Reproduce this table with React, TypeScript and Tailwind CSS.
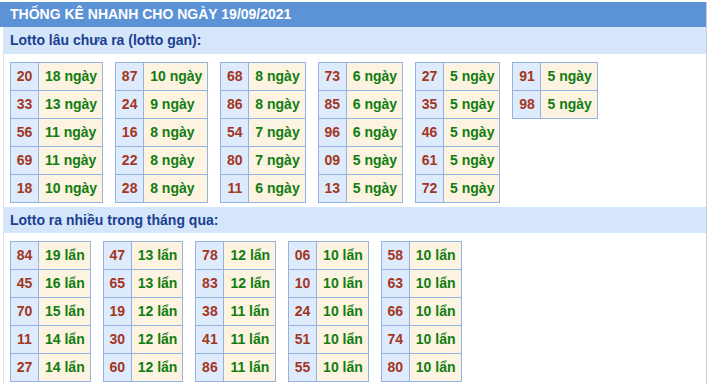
const ganCols: [string, string][][] = [
  [["20", "18"], ["33", "13"], ["56", "11"], ["69", "11"], ["18", "10"]],
  [["87", "10"], ["24", "9"], ["16", "8"], ["22", "8"], ["28", "8"]],
  [["68", "8"], ["86", "8"], ["54", "7"], ["80", "7"], ["11", "6"]],
  [["73", "6"], ["85", "6"], ["96", "6"], ["09", "5"], ["13", "5"]],
  [["27", "5"], ["35", "5"], ["46", "5"], ["61", "5"], ["72", "5"]],
  [["91", "5"], ["98", "5"]],
];

const nhieuCols: [string, string][][] = [
  [["84", "19"], ["45", "16"], ["70", "15"], ["11", "14"], ["27", "14"]],
  [["47", "13"], ["65", "13"], ["19", "12"], ["30", "12"], ["60", "12"]],
  [["78", "12"], ["83", "12"], ["38", "11"], ["41", "11"], ["86", "11"]],
  [["06", "10"], ["10", "10"], ["24", "10"], ["51", "10"], ["55", "10"]],
  [["58", "10"], ["63", "10"], ["66", "10"], ["74", "10"], ["80", "10"]],
];

function StatTable({ rows, unit }: { rows: [string, string][]; unit: string }) {
  return (
    <table className="border-collapse">
      <tbody>
        {rows.map(([num, count]) => (
          <tr key={num} className="h-[28px]">
            <td className="w-[28px] p-0 border border-[#94b3e3] bg-[#deebfc] text-center text-[#a3361f]">{num}</td>
            <td className="border border-[#94b3e3] bg-[#fdf3e1] pl-[6px] pr-[5px] text-[#117d11] whitespace-nowrap">
              {count} {unit}
            </td>
          </tr>
        ))}
      </tbody>
    </table>
  );
}

function Section({ title, cols, unit, barH, pb }: { title: string; cols: [string, string][][]; unit: string; barH: string; pb: string }) {
  return (
    <>
      <div className={`${barH} bg-[#d5e6fb] pl-[6px] flex items-center text-[#1b3f8f]`}>{title}</div>
      <div className={`flex items-start gap-[12px] pl-[6px] pt-[8px] ${pb}`}>
        {cols.map((rows, i) => (
          <StatTable key={i} rows={rows} unit={unit} />
        ))}
      </div>
    </>
  );
}

export default function App() {
  return (
    <div className="w-[710px] h-[387px] bg-white pt-[2px] font-['Liberation_Sans',Arial,sans-serif] font-bold text-[14px]">
      <div className="w-[707px] border-r border-[#c9ced6]">
        <div className="h-[25px] bg-[#5b93d6] pl-[10px] flex items-center text-white text-[14px]">
          THỐNG KÊ NHANH CHO NGÀY 19/09/2021
        </div>
        <div className="ml-[3px] border-l border-[#dfe3ea] pb-[1px]">
          <Section title="Lotto lâu chưa ra (lotto gan):" cols={ganCols} unit="ngày" barH="h-[27px]" pb="pb-[4px]" />
          <Section title="Lotto ra nhiều trong tháng qua:" cols={nhieuCols} unit="lẩn" barH="h-[26px]" pb="pb-[1px]" />
        </div>
      </div>
    </div>
  );
}
